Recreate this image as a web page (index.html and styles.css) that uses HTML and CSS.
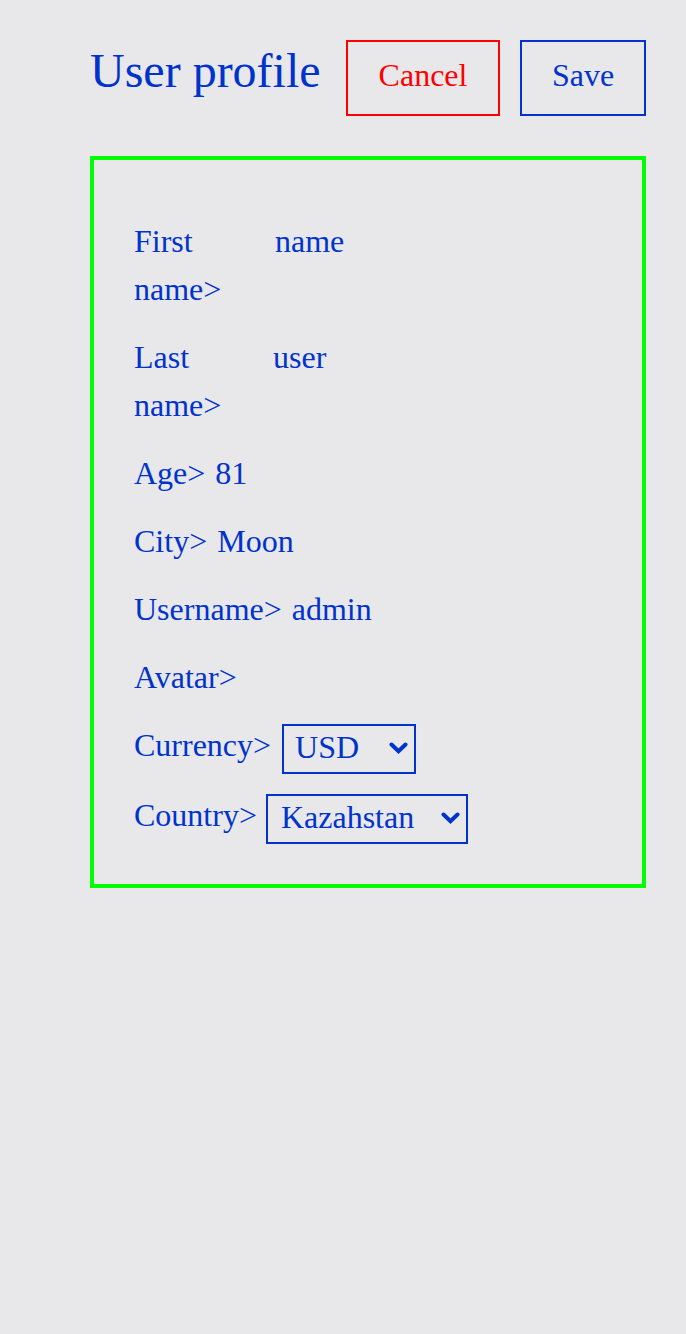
FILE: index.html
```html
<!DOCTYPE html>
<html lang="en">
<head>
<meta charset="utf-8">
<title>User profile</title>
<link rel="stylesheet" href="styles.css">
</head>
<body>
<header class="header">
  <h1 class="title">User profile</h1>
  <button class="btn btn--cancel" type="button">Cancel</button>
  <button class="btn btn--save" type="button">Save</button>
</header>
<main class="card">
  <div class="row">
    <span class="label label--first">First name&gt;</span>
    <span class="value">name</span>
  </div>
  <div class="row">
    <span class="label label--last">Last name&gt;</span>
    <span class="value">user</span>
  </div>
  <div class="row">
    <span class="label">Age&gt;</span>
    <span class="value">81</span>
  </div>
  <div class="row">
    <span class="label">City&gt;</span>
    <span class="value">Moon</span>
  </div>
  <div class="row">
    <span class="label">Username&gt;</span>
    <span class="value">admin</span>
  </div>
  <div class="row">
    <span class="label">Avatar&gt;</span>
  </div>
  <div class="row row--select row--currency">
    <span class="label">Currency&gt;</span>
    <span class="select-wrap select-wrap--currency">
      <select class="select">
        <option>USD</option>
        <option>EUR</option>
        <option>RUB</option>
      </select>
      <svg class="chevron" width="19" height="12" viewBox="0 0 19 12" aria-hidden="true"><path d="M2.5 2.5 L9.5 9.2 L16.5 2.5" fill="none" stroke="#0033cc" stroke-width="4" stroke-linecap="round" stroke-linejoin="miter"/></svg>
    </span>
  </div>
  <div class="row row--select">
    <span class="label">Country&gt;</span>
    <span class="select-wrap select-wrap--country">
      <select class="select">
        <option>Kazahstan</option>
        <option>Russia</option>
        <option>Ukraine</option>
      </select>
      <svg class="chevron" width="19" height="12" viewBox="0 0 19 12" aria-hidden="true"><path d="M2.5 2.5 L9.5 9.2 L16.5 2.5" fill="none" stroke="#0033cc" stroke-width="4" stroke-linecap="round" stroke-linejoin="miter"/></svg>
    </span>
  </div>
</main>
</body>
</html>
```

FILE: styles.css
```css
html, body {
  margin: 0;
  padding: 0;
}

body {
  background: #e8e8ea;
  font-family: "Liberation Serif", "Times New Roman", serif;
  color: #0033cc;
  width: 686px;
  min-height: 1334px;
}

.header {
  display: flex;
  align-items: flex-start;
  gap: 20px;
  padding: 40px 40px 0 90px;
}

.title {
  margin: 3px auto 0 0;
  font-size: 48px;
  font-weight: normal;
  line-height: 55px;
  color: #0033cc;
}

.btn {
  height: 76px;
  box-sizing: border-box;
  background: transparent;
  font-family: "Liberation Serif", "Times New Roman", serif;
  font-size: 32px;
  line-height: 36px;
  padding: 15px 0 21px;
  text-align: center;
  cursor: pointer;
}

.btn--cancel {
  width: 154px;
  border: 2px solid #ff0000;
  color: #ff0000;
}

.btn--save {
  width: 126px;
  border: 2px solid #0033cc;
  color: #0033cc;
}

.card {
  margin: 40px 40px 0 90px;
  border: 4px solid #00ff00;
  padding: 57px 40px 40px;
  display: flex;
  flex-direction: column;
  gap: 20px;
  font-size: 32px;
  line-height: 48px;
}

.row {
  display: flex;
  align-items: flex-start;
  gap: 10px;
}

.row--select .label {
  margin-top: -3px;
}

.row--currency {
  margin-top: 3px;
}

.label--first {
  width: 131px;
}

.label--last {
  width: 129px;
}

.select-wrap {
  position: relative;
  display: inline-block;
}

.select-wrap--currency {
  margin-left: 1px;
}

.select-wrap--country {
  margin-left: -1px;
}

.select {
  appearance: none;
  -webkit-appearance: none;
  box-sizing: border-box;
  height: 50px;
  border: 2px solid #0033cc;
  border-radius: 0;
  background: transparent;
  color: #0033cc;
  font-family: "Liberation Serif", "Times New Roman", serif;
  font-size: 32px;
  line-height: 42px;
  padding: 0 0 4px 11px;
  margin: 0;
  display: block;
}

.select-wrap--currency .select {
  width: 134px;
}

.select-wrap--country .select {
  width: 202px;
  padding-left: 13px;
}

.chevron {
  position: absolute;
  right: 8px;
  top: 18px;
  pointer-events: none;
}
```
